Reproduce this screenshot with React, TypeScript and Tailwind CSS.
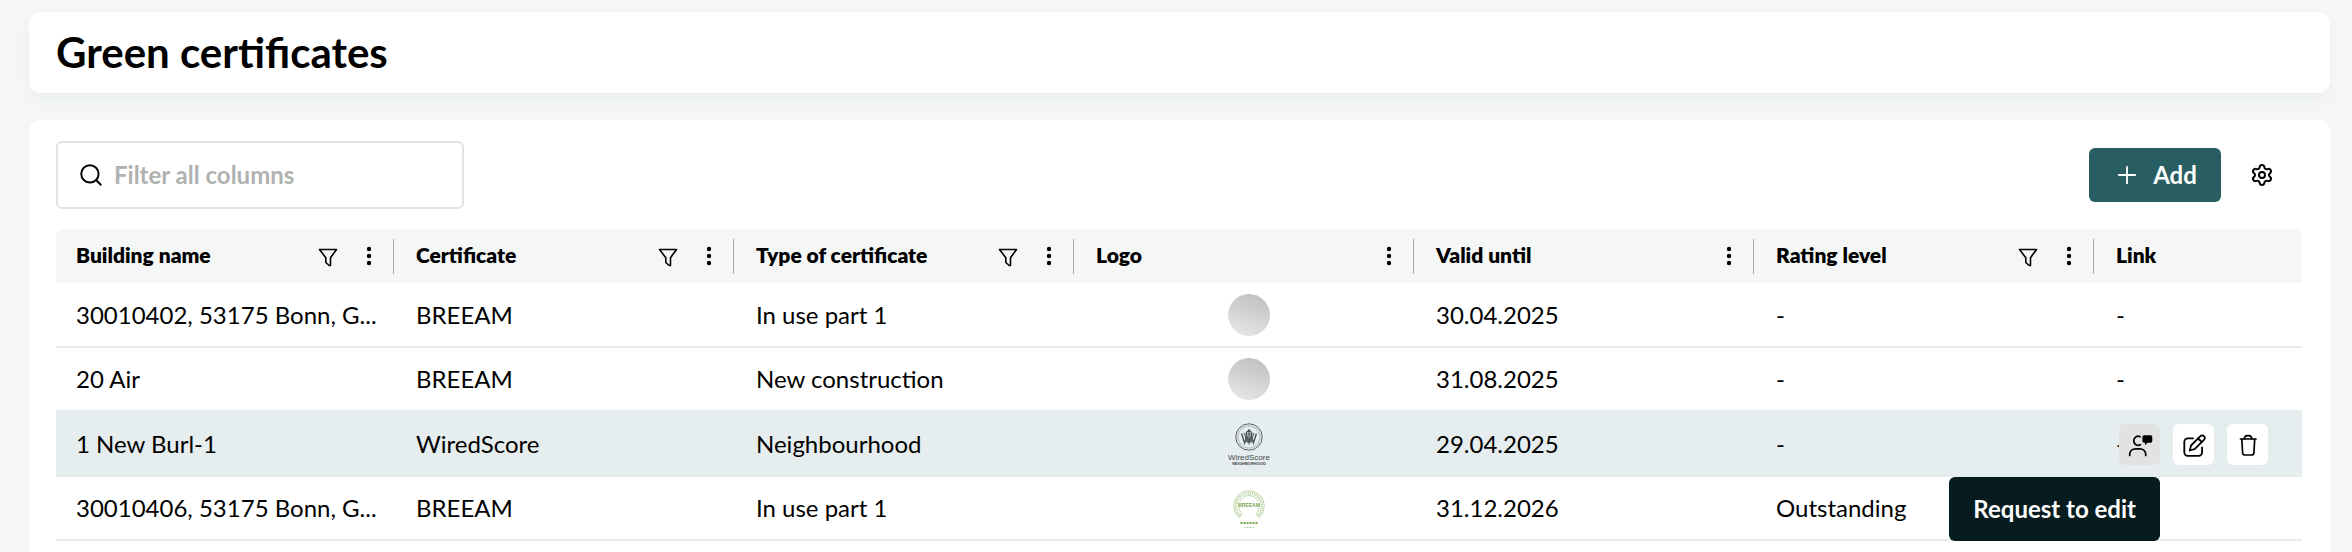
import { Plus, Search, Settings } from "lucide-react";

type Column = {
  label: string;
  filter: boolean;
  menu: boolean;
};

type Certificate = {
  id: number;
  building: string;
  certificate: string;
  type: string;
  logo: "none" | "wiredscore" | "breeam";
  validUntil: string;
  rating: string;
  link: string;
  active?: boolean;
};

const columns: Column[] = [
  { label: "Building name", filter: true, menu: true },
  { label: "Certificate", filter: true, menu: true },
  { label: "Type of certificate", filter: true, menu: true },
  { label: "Logo", filter: false, menu: true },
  { label: "Valid until", filter: false, menu: true },
  { label: "Rating level", filter: true, menu: true },
  { label: "Link", filter: false, menu: false },
];

const certificates: Certificate[] = [
  {
    id: 1,
    building: "30010402, 53175 Bonn, G...",
    certificate: "BREEAM",
    type: "In use part 1",
    logo: "none",
    validUntil: "30.04.2025",
    rating: "-",
    link: "-",
  },
  {
    id: 2,
    building: "20 Air",
    certificate: "BREEAM",
    type: "New construction",
    logo: "none",
    validUntil: "31.08.2025",
    rating: "-",
    link: "-",
  },
  {
    id: 3,
    building: "1 New Burl-1",
    certificate: "WiredScore",
    type: "Neighbourhood",
    logo: "wiredscore",
    validUntil: "29.04.2025",
    rating: "-",
    link: "-",
    active: true,
  },
  {
    id: 4,
    building: "30010406, 53175 Bonn, G...",
    certificate: "BREEAM",
    type: "In use part 1",
    logo: "breeam",
    validUntil: "31.12.2026",
    rating: "Outstanding",
    link: "",
  },
];

function FunnelIcon() {
  return (
    <svg viewBox="0 0 20 20" className="h-5 w-5" fill="none" stroke="currentColor" strokeWidth="1.6" strokeLinejoin="round">
      <path d="M1.5 1.5h17l-6 8.2v7.8h-1.3l-3.4-3V9.700z" />
    </svg>
  );
}

function DotsIcon() {
  return (
    <svg viewBox="0 0 6 20" className="h-5 w-[6px]" fill="currentColor">
      <circle cx="3" cy="3" r="2.2" />
      <circle cx="3" cy="10" r="2.2" />
      <circle cx="3" cy="17" r="2.2" />
    </svg>
  );
}

function RequestIcon() {
  return (
    <svg viewBox="0 0 24 24" className="h-6 w-6 overflow-visible" fill="none" stroke="currentColor" strokeWidth="1.7" strokeLinecap="round">
      <path d="M12.2 3.700a4.500 4.500 0 1 0 .2 8" />
      <path d="M1.700 22.500v-1c0-3.400 2.500-5.700 6-5.700h4c3.500 0 6 2.300 6 5.700v1" />
      <path
        d="M16 2.300h6.700a1.600 1.600 0 0 1 1.600 1.600v4.200a1.600 1.600 0 0 1-1.600 1.600h-3.200l-2.500 2.500V9.700h-1a1.600 1.600 0 0 1-1.600-1.600V3.900A1.600 1.600 0 0 1 16 2.300z"
        fill="currentColor"
        stroke="none"
      />
    </svg>
  );
}

function EditIcon() {
  return (
    <svg
      viewBox="0 0 24 24"
      className="h-6 w-6 overflow-visible"
      fill="none"
      stroke="currentColor"
      strokeWidth="1.8"
      strokeLinecap="round"
      strokeLinejoin="round"
    >
      <path d="M11 5.400H5.800a3.500 3.500 0 0 0-3.500 3.500v10.400a3.500 3.500 0 0 0 3.500 3.500h10.800a3.500 3.500 0 0 0 3.500-3.500v-4.800" />
      <path d="M7.800 17.500l1.200-5 9.400-9.300a2.500 2.500 0 0 1 3.600 0 2.500 2.500 0 0 1 0 3.600l-9.400 9.400z" />
      <path d="M16.200 5.500l3.500 3.500" />
    </svg>
  );
}

function TrashIcon() {
  return (
    <svg
      viewBox="0 0 24 24"
      className="h-6 w-6"
      fill="none"
      stroke="currentColor"
      strokeWidth="1.7"
      strokeLinecap="round"
      strokeLinejoin="round"
    >
      <path d="M4.500 6h15.500" />
      <path d="M8.300 6c.2-2.200 1.200-3.400 2.800-3.400H13c1.600 0 2.600 1.200 2.800 3.400" />
      <path d="M5.800 6.200l.8 13.500A2.400 2.400 0 0 0 9 22h6.500a2.400 2.400 0 0 0 2.400-2.300l.8-13.500" />
    </svg>
  );
}

function WiredScoreLogo() {
  return (
    <svg viewBox="0 0 42 42" className="h-[42px] w-[42px]" role="img" aria-label="WiredScore">
      <g fill="none" stroke="#4b5356">
        <circle cx="21" cy="14" r="13.2" strokeWidth="0.9" />
        <circle cx="21" cy="14" r="11" strokeWidth="1.4" strokeDasharray="1 0.8" opacity="0.45" />
        <path d="M13.600 10.500l3 9.500 2.200-7 2.200 7 2.200-7 2.200 7 3-9.500" strokeWidth="1.400" />
        <path d="M16.200 10l3 9.500L21 15l1.800 4.500 3-9.500" strokeWidth="1" />
        <path d="M18.300 13V9.500L21 7l2.700 2.500V13M21 6v9M18.500 11h5" strokeWidth="1.200" />
      </g>
      <text
        x="21"
        y="37"
        textAnchor="middle"
        className="font-['Liberation_Sans',sans-serif] text-[8px] font-medium"
        fill="#3f474a"
      >
        WiredScore
      </text>
      <text
        x="21"
        y="42"
        textAnchor="middle"
        className="font-['Liberation_Sans',sans-serif] text-[4px] font-bold"
        fill="#3f474a"
      >
        NEIGHBORHOOD
      </text>
    </svg>
  );
}

function BreeamLogo() {
  return (
    <svg viewBox="0 0 42 42" className="h-[42px] w-[42px]" role="img" aria-label="BREEAM Outstanding">
      <g fill="none" stroke="#93bb6c">
        <path d="M11 30.500a15.200 15.200 0 1 1 20 0l-3.200-3.800a10.400 10.400 0 1 0-13.600 0z" strokeWidth="0.600" />
        <path d="M12.400 28.800a13 13 0 1 1 17.200 0" strokeWidth="2.400" strokeDasharray="1 0.900" opacity="0.700" />
      </g>
      <rect x="11" y="14.500" width="20" height="6.500" fill="#ffffff" />
      <text
        x="21"
        y="20"
        textAnchor="middle"
        className="font-['Liberation_Sans',sans-serif] text-[5px] font-bold"
        fill="#76a84a"
      >
        BREEAM
      </text>
      <path d="M12.500 36h17" stroke="#76a84a" strokeWidth="2.200" strokeDasharray="2 1" />
      <text x="21" y="41" textAnchor="middle" className="font-['Liberation_Sans',sans-serif] text-[2px]" fill="#76a84a">
        Outstanding
      </text>
    </svg>
  );
}

function CertificateLogo({ logo }: { logo: Certificate["logo"] }) {
  if (logo === "wiredscore") return <WiredScoreLogo />;
  if (logo === "breeam") return <BreeamLogo />;
  return <span className="h-[42px] w-[42px] rounded-full bg-linear-[200deg] from-[#bdbdbd] to-[#e9e9e9]" />;
}

function RowActions() {
  return (
    <div className="absolute top-3 right-[34px] flex gap-[13px]">
      <button
        type="button"
        aria-label="Request to edit"
        className="flex h-[41px] w-[41px] items-center justify-center rounded-md bg-[#e1e3e2]"
      >
        <RequestIcon />
      </button>
      <button type="button" aria-label="Edit" className="flex h-[41px] w-[41px] items-center justify-center rounded-md bg-white">
        <EditIcon />
      </button>
      <button type="button" aria-label="Delete" className="flex h-[41px] w-[41px] items-center justify-center rounded-md bg-white">
        <TrashIcon />
      </button>
      <span
        role="tooltip"
        className="absolute top-[53px] right-[108px] z-10 flex h-16 items-center rounded-md bg-[#071c1f] px-6 text-2xl font-bold whitespace-nowrap text-white"
      >
        Request to edit
      </span>
    </div>
  );
}

export default function App() {
  return (
    <main className="flex min-h-screen flex-col bg-[#f5f7f6] pt-3 pr-[22px] pl-[29px] font-[Lato,sans-serif] text-black">
      <header className="rounded-xl bg-white px-[27px] pt-4 pb-[17px] shadow-[0_6px_14px_rgba(40,93,98,0.05)]">
        <h1 className="text-[42px] leading-[48px] font-bold">Green certificates</h1>
      </header>

      <section className="mt-[27px] flex-1 rounded-t-xl bg-white pt-[21px] pr-7 pl-[27px]">
        <div className="flex items-center justify-between">
          <label className="flex h-[68px] w-[408px] items-center gap-[10px] rounded-md border-2 border-[#e1e3e2] px-5">
            <Search className="h-[26px] w-[26px] shrink-0" strokeWidth={1.8} />
            <input
              type="text"
              aria-label="Filter all columns"
              placeholder="Filter all columns"
              className="w-full text-2xl font-bold outline-none placeholder:text-[#b0b2b1]"
            />
          </label>

          <div className="flex items-center gap-[17px] pr-4">
            <button
              type="button"
              className="flex h-[54px] w-[132px] items-center justify-center gap-3 rounded-md bg-[#285d62] text-2xl font-bold text-white"
            >
              <Plus className="h-7 w-7" strokeWidth={1.6} />
              Add
            </button>
            <button type="button" aria-label="Table settings" className="flex h-12 w-12 items-center justify-center">
              <Settings className="h-6 w-6" />
            </button>
          </div>
        </div>

        <table className="mt-5 w-full table-fixed border-separate border-spacing-0">
          <thead>
            <tr className="h-[54px]">
              {columns.map(({ label, filter, menu }) => (
                <th
                  key={label}
                  scope="col"
                  className="w-[340px] bg-[#f5f7f6] p-0 text-left text-[21px] font-extrabold first:rounded-tl-md last:w-auto last:rounded-tr-md"
                >
                  <div className={`mr-[2px] flex h-[35px] items-center pl-5 ${menu ? "border-r border-[#a9abaa] pr-[21px]" : ""}`}>
                    <span className="flex-1 pb-[2px] whitespace-nowrap">{label}</span>
                    {filter && (
                      <button type="button" aria-label={`Filter ${label}`} className="mr-7 pt-[3px]">
                        <FunnelIcon />
                      </button>
                    )}
                    {menu && (
                      <button type="button" aria-label={`${label} menu`}>
                        <DotsIcon />
                      </button>
                    )}
                  </div>
                </th>
              ))}
            </tr>
          </thead>
          <tbody className="text-2xl">
            {certificates.map((row) => (
              <tr
                key={row.id}
                className={`odd:h-[65px] even:h-16 *:border-b-2 *:border-[#e6edee] *:py-0 *:pr-[14px] *:pl-5 ${row.active ? "bg-[#e6edee]" : ""}`}
              >
                <td className="whitespace-nowrap">{row.building}</td>
                <td>{row.certificate}</td>
                <td>{row.type}</td>
                <td>
                  <div className="flex justify-center">
                    <CertificateLogo logo={row.logo} />
                  </div>
                </td>
                <td>{row.validUntil}</td>
                <td>{row.rating}</td>
                <td className="relative">
                  {row.link}
                  {row.active && <RowActions />}
                </td>
              </tr>
            ))}
          </tbody>
        </table>
      </section>
    </main>
  );
}
